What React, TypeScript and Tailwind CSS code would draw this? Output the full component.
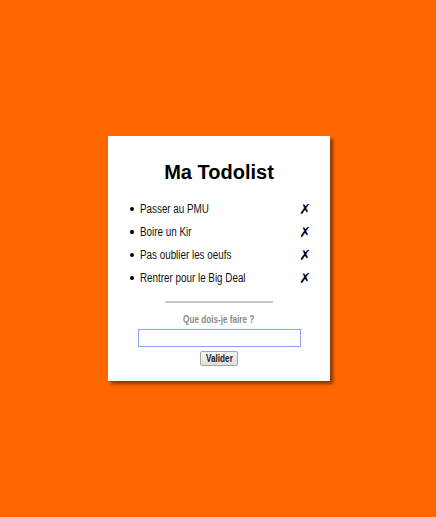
import { useState } from "react";

const initialTodos = [
  "Passer au PMU",
  "Boire un Kir",
  "Pas oublier les oeufs",
  "Rentrer pour le Big Deal",
];

// Petite todolist sur fond orange
export default function App() {
  const [todos, setTodos] = useState<string[]>(initialTodos);
  const [text, setText] = useState("");

  const addTodo = () => {
    if (text.trim() === "") return;
    setTodos([...todos, text.trim()]);
    setText("");
  };

  const removeTodo = (index: number) => {
    setTodos(todos.filter((_, i) => i !== index));
  };

  return (
    <div className="min-h-screen flex items-center justify-center bg-[#ff6600] font-['Liberation_Sans',Arial,sans-serif]">
      <div className="ml-[2px] w-[222px] bg-white pt-6 pb-[15px] px-[22px] shadow-[3px_3px_3px_rgba(0,0,0,0.45)] flex flex-col items-center">
        <h1 className="text-[20px] leading-[24px] font-bold text-black">
          Ma Todolist
        </h1>

        <ul className="w-full mt-[12.5px]">
          {todos.map((todo, i) => (
            <li
              key={i}
              className="h-[23.33px] flex items-center justify-between text-[12px] text-[#111]"
            >
              <span className="flex items-center">
                <span className="w-[4px] h-[4px] rounded-full bg-black mr-[6px]" />
                <span className="inline-block origin-left scale-x-[0.82] whitespace-nowrap">
                  {todo}
                </span>
              </span>
              <button
                type="button"
                onClick={() => removeTodo(i)}
                className="-mr-[3px] text-[14px] leading-[14px] font-bold font-['DejaVu_Sans',sans-serif] text-black"
              >
                ✗
              </button>
            </li>
          ))}
        </ul>

        <hr className="w-[108px] mt-[10.5px] border-0 h-[2px] bg-[#c8c8c8]" />

        <p className="mt-[11px] text-[10px] leading-[12px] font-bold text-[#8a8a8a] whitespace-nowrap scale-x-[0.815]">
          Que dois-je faire ?
        </p>

        <input
          type="text"
          value={text}
          onChange={(e) => setText(e.target.value)}
          className="mt-[3px] w-[163px] h-[18px] border border-[#86a9ec] outline-none text-[12px] px-1"
        />

        <button
          type="button"
          onClick={addTodo}
          className="mt-[4px] w-[38px] h-[15px] flex items-center justify-center text-[10px] leading-[13px] font-bold text-[#222] bg-gradient-to-b from-[#f6f6f6] to-[#dedede] border border-[#a6a6a6] rounded-[2px]"
        >
          <span className="inline-block scale-x-[0.82]">Valider</span>
        </button>
      </div>
    </div>
  );
}
